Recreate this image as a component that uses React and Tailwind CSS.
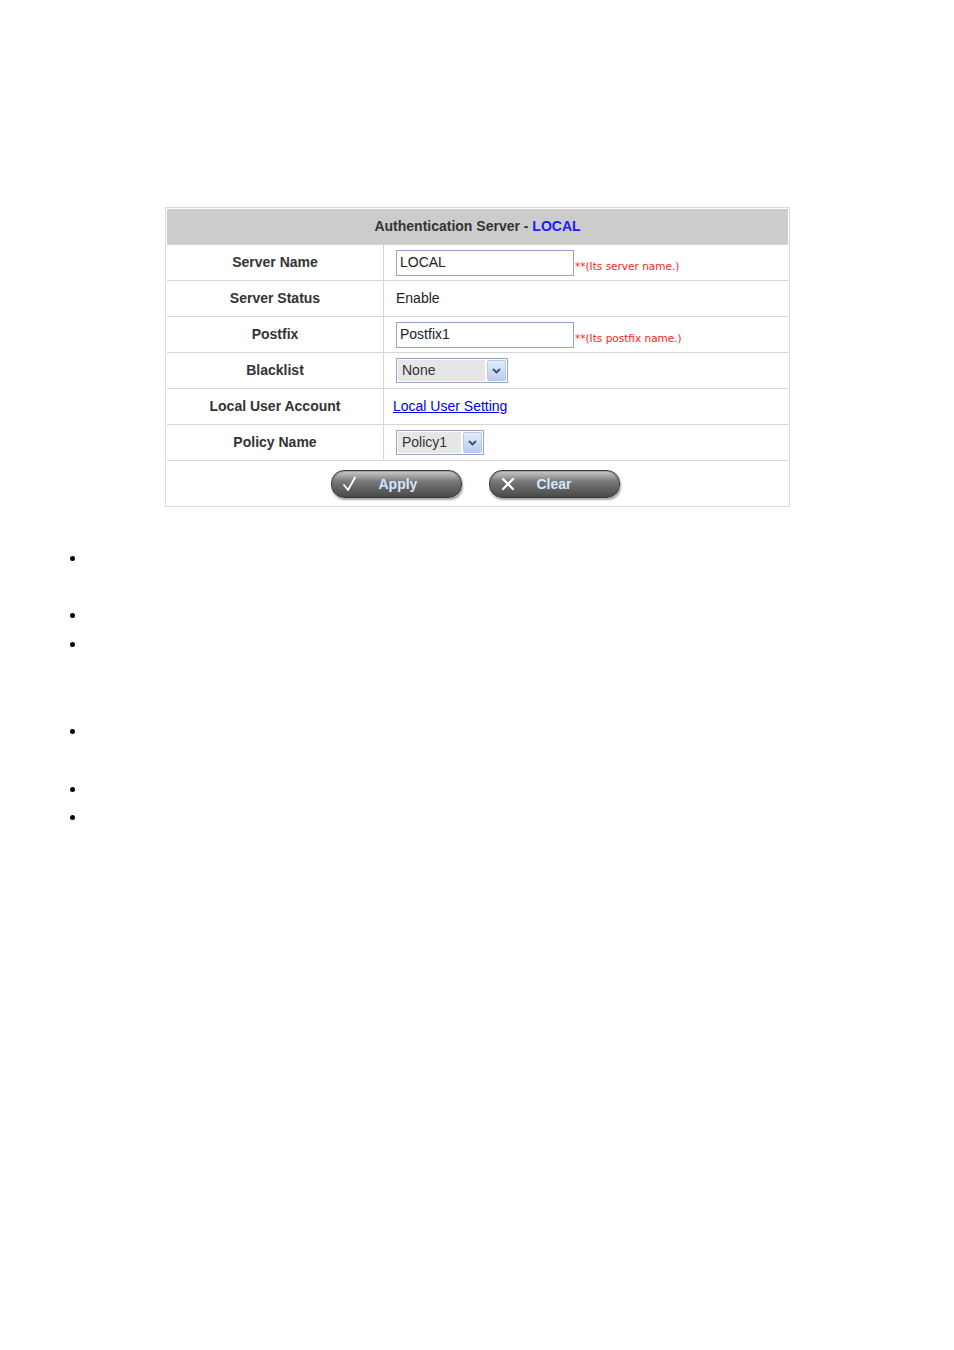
import React from 'react';

const font = { fontFamily: '"Liberation Sans", Arial, sans-serif' };

function Row({ label, children }) {
  return (
    <div className="flex h-[36px] border-t border-[#d6d6d6]">
      <div className="w-[216px] shrink-0 flex items-center justify-center text-[14px] font-bold text-[#333333]">
        {label}
      </div>
      <div className="flex-1 flex items-center border-l border-[#d6d6d6] pl-[12px] text-[14px] text-[#222222]">
        {children}
      </div>
    </div>
  );
}

function TextBox({ value, hint, width = 'w-[178px]' }) {
  return (
    <div className="flex items-end">
      <div className={`${width} h-[26px] border border-[#8fa9c6] bg-white flex items-center pl-[3px] text-[14px] text-[#222222]`}>
        {value}
      </div>
      <span
        className="text-[10.5px] text-[#ff1a1a] leading-[14px] mb-[3px] ml-px"
        style={{ fontFamily: '"DejaVu Sans", Verdana, sans-serif' }}
      >
        **(Its {hint} name.)
      </span>
    </div>
  );
}

function Select({ value, width, fill }) {
  return (
    <div className={`${width} h-[25px] border border-[#8fa9c6] bg-white flex items-center p-px gap-[2px]`}>
      <div className={`${fill} h-full bg-[#e6e6e6] flex items-center pl-[4px] text-[14px] text-[#333333]`}>
        {value}
      </div>
      <div className="w-[19px] h-full rounded-[2px] border border-[#b4c9e6] bg-gradient-to-b from-[#e4eefc] to-[#b7cdf0] flex items-center justify-center">
        <svg width="9" height="6" viewBox="0 0 9 6">
          <path d="M1 1 L4.5 4.5 L8 1" fill="none" stroke="#3b4e6e" strokeWidth="1.8" />
        </svg>
      </div>
    </div>
  );
}

function PillButton({ label, icon }) {
  return (
    <div className="w-[131px] h-[28px] rounded-[13px] border border-[#3a3a3a] bg-gradient-to-b from-[#a5a5a5] via-[#6f6f6f] to-[#4a4a4a] shadow-[1px_2px_2px_rgba(0,0,0,0.35)] flex items-center pl-[10px] relative">
      <div className="absolute left-[3px] right-[3px] top-[1px] h-[9px] rounded-t-[11px] bg-gradient-to-b from-[rgba(255,255,255,0.35)] to-transparent" />
      <div className="w-[16px] flex justify-center">{icon}</div>
      <span className="ml-[21px] text-[14px] font-bold text-[#d6e6ff] leading-none">{label}</span>
    </div>
  );
}

export default function App() {
  const dots = [559, 616, 645, 732, 790, 818];
  return (
    <div className="w-[954px] h-[1350px] bg-white pt-[207px]" style={font}>
      <div className="ml-[165px] w-[625px] border border-[#dadada] p-px">
        <div className="h-[35px] bg-[#cccccc] flex items-center justify-center text-[14px] font-bold text-[#333333]">
          Authentication Server -&nbsp;<span className="text-[#1a1aff]">LOCAL</span>
        </div>
        <Row label="Server Name">
          <TextBox value="LOCAL" hint="server" />
        </Row>
        <Row label="Server Status">Enable</Row>
        <Row label="Postfix">
          <TextBox value="Postfix1" hint="postfix" />
        </Row>
        <Row label="Blacklist">
          <Select value="None" width="w-[112px]" fill="w-[87px]" />
        </Row>
        <Row label="Local User Account">
          <span className="-ml-[3px] text-[#0000ee] underline">Local User Setting</span>
        </Row>
        <Row label="Policy Name">
          <Select value="Policy1" width="w-[88px]" fill="w-[63px]" />
        </Row>
        <div className="h-[45px] border-t border-[#d6d6d6] flex items-center justify-center gap-[27px] pr-[5px] pt-[2px]">
          <PillButton
            label="Apply"
            icon={
              <svg width="16" height="16" viewBox="0 0 16 16">
                <path d="M2 9 L6 14 L13 1.5" fill="none" stroke="#ffffff" strokeWidth="1.8" strokeLinecap="round" strokeLinejoin="round" />
              </svg>
            }
          />
          <PillButton
            label="Clear"
            icon={
              <svg width="14" height="14" viewBox="0 0 14 14">
                <path d="M2 2 L12 12 M12 2 L2 12" fill="none" stroke="#ffffff" strokeWidth="2.2" strokeLinecap="round" />
              </svg>
            }
          />
        </div>
      </div>
      <div className="flex flex-col pl-[70px]">
        {dots.map((y, i) => (
          <div
            key={i}
            className="w-[5px] h-[5px] rounded-full bg-black"
            style={{ marginTop: i === 0 ? y - 2 - 508 : y - dots[i - 1] - 5 }}
          />
        ))}
      </div>
    </div>
  );
}
